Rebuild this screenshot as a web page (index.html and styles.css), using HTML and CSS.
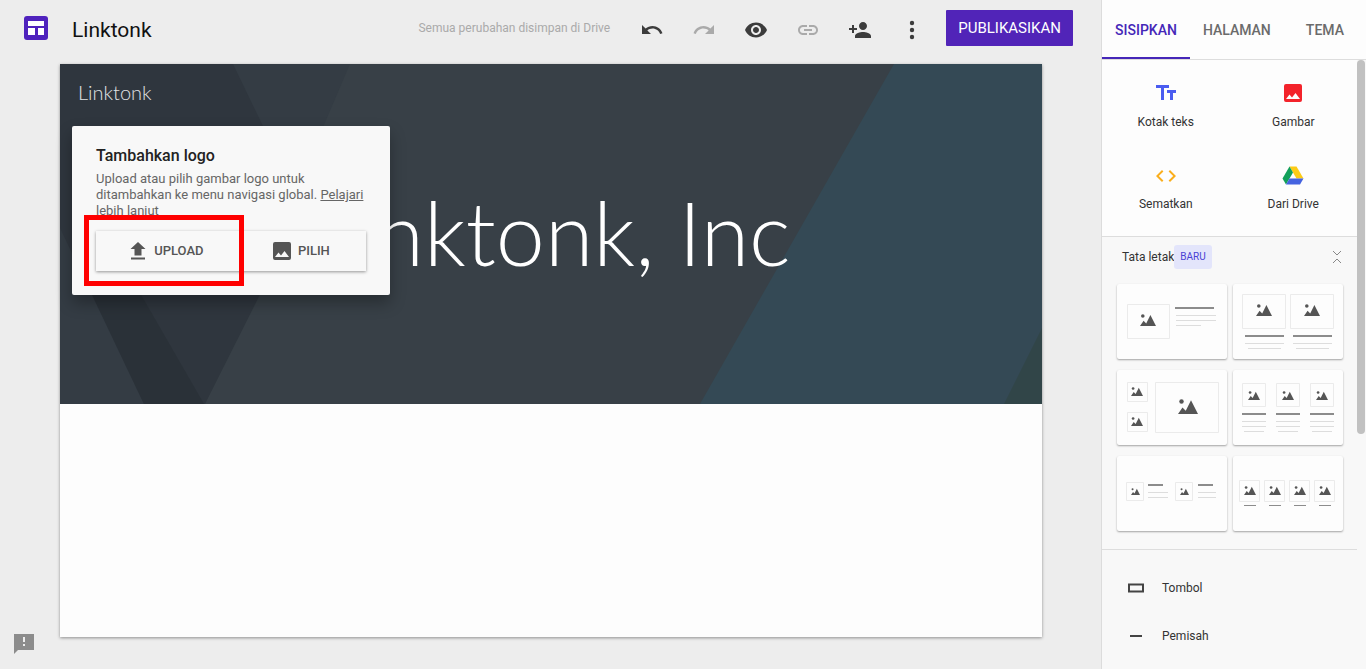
FILE: index.html
```
<!DOCTYPE html>
<html lang="id">
<head>
    <meta charset="UTF-8">
    <meta name="viewport" content="width=device-width, initial-scale=1.0">
    <title>Linktonk</title>
    <link rel="stylesheet" href="styles.css">
</head>
<body>
    <svg class="defs" aria-hidden="true">
        <symbol id="hills" viewBox="0 0 16 12">
            <circle cx="2.8" cy="2" r="1.8"/>
            <path d="M0 12l3.6-5.2 2.6 2.6L10.4 1 16 12z"/>
        </symbol>
    </svg>

    <div class="editor">
        <header class="topbar">
            <svg class="logo" viewBox="0 0 24 24">
                <rect width="24" height="24" rx="3" fill="#4f22bd"/>
                <path d="M4 5h16v5H4zM4 12h7v7H4zM14 12h6v7h-6z" fill="#fff"/>
            </svg>
            <h1 class="doc-title">Linktonk</h1>
            <span class="status">Semua perubahan disimpan di Drive</span>
            <div class="tools">
                <button class="tool" aria-label="Urungkan"><svg viewBox="0 0 24 24"><path d="M12.5 8c-2.65 0-5.05.99-6.9 2.6L2 7v9h9l-3.62-3.62c1.39-1.16 3.16-1.88 5.12-1.88 3.54 0 6.55 2.31 7.6 5.5l2.37-.78C21.08 11.03 17.15 8 12.5 8z"/></svg></button>
                <button class="tool off" aria-label="Ulangi"><svg viewBox="0 0 24 24"><path d="M18.4 10.6C16.55 8.99 14.15 8 11.5 8c-4.65 0-8.58 3.03-9.96 7.22L3.9 16c1.05-3.19 4.05-5.5 7.6-5.5 1.95 0 3.73.72 5.12 1.88L13 16h9V7l-3.6 3.6z"/></svg></button>
                <button class="tool" aria-label="Pratinjau"><svg viewBox="0 0 24 24"><path d="M12 4.5C7 4.5 2.73 7.61 1 12c1.73 4.39 6 7.5 11 7.5s9.27-3.11 11-7.5c-1.73-4.39-6-7.5-11-7.5zM12 17c-2.76 0-5-2.24-5-5s2.24-5 5-5 5 2.24 5 5-2.24 5-5 5zm0-8c-1.66 0-3 1.34-3 3s1.34 3 3 3 3-1.34 3-3-1.34-3-3-3z"/></svg></button>
                <button class="tool off" aria-label="Salin link"><svg viewBox="0 0 24 24"><path d="M3.9 12c0-1.71 1.39-3.1 3.1-3.1h4V7H7c-2.76 0-5 2.24-5 5s2.24 5 5 5h4v-1.9H7c-1.71 0-3.1-1.39-3.1-3.1zM8 13h8v-2H8v2zm9-6h-4v1.9h4c1.71 0 3.1 1.39 3.1 3.1s-1.39 3.1-3.1 3.1h-4V17h4c2.76 0 5-2.24 5-5s-2.24-5-5-5z"/></svg></button>
                <button class="tool" aria-label="Bagikan"><svg viewBox="0 0 24 24"><path d="M15 12c2.21 0 4-1.79 4-4s-1.79-4-4-4-4 1.79-4 4 1.79 4 4 4zm-9-2V7H4v3H1v2h3v3h2v-3h3v-2H6zm9 4c-2.67 0-8 1.34-8 4v2h16v-2c0-2.66-5.33-4-8-4z"/></svg></button>
                <button class="tool" aria-label="Lainnya"><svg viewBox="0 0 24 24"><circle cx="12" cy="5" r="2.2"/><circle cx="12" cy="12" r="2.2"/><circle cx="12" cy="19" r="2.2"/></svg></button>
            </div>
            <button class="publish">PUBLIKASIKAN</button>
        </header>

        <main class="site">
            <section class="banner">
                <svg class="banner-art" viewBox="0 0 982 340" preserveAspectRatio="none" aria-hidden="true">
                    <rect width="982" height="340" fill="#384047"/>
                    <path d="M0 0h290L145 340H0z" fill="#343c44"/>
                    <path d="M0 0h173l70 145-98 195H84L0 164z" fill="#2f363e"/>
                    <path d="M28 222h48l68 118H84z" fill="#2a3138"/>
                    <path d="M834 0h148v340H640z" fill="#344955"/>
                    <path d="M982 264v76h-38z" fill="#314548"/>
                </svg>
                <a class="site-name" href="#">Linktonk</a>
                <h2 class="site-title">Linktonk, Inc</h2>
                <div class="popup">
                    <h3>Tambahkan logo</h3>
                    <p>Upload atau pilih gambar logo untuk ditambahkan ke menu navigasi global. <a href="#">Pelajari lebih lanjut</a></p>
                    <div class="popup-actions">
                        <button><svg viewBox="0 0 20 20"><path d="M6.500 14.500h7V8h4L10 1 2.500 8h4zM3 16.500h14v2H3z"/></svg>UPLOAD</button>
                        <button><svg viewBox="0 0 20 20"><path d="M19 17V3a2 2 0 0 0-2-2H3a2 2 0 0 0-2 2v14a2 2 0 0 0 2 2h14a2 2 0 0 0 2-2zM6.500 11.500l2.500 3 3.500-4.500 4.500 6H3z"/></svg>PILIH</button>
                    </div>
                    <div class="highlight"></div>
                </div>
            </section>
        </main>

        <button class="feedback" aria-label="Masukan"><svg viewBox="0 0 24 24"><path d="M22 2H2v20l4-4h16zM13 14h-2v-2h2zm0-4h-2V5h2z"/></svg></button>
    </div>

    <aside class="panel">
        <nav class="tabs">
            <button class="tab active">SISIPKAN</button>
            <button class="tab">HALAMAN</button>
            <button class="tab">TEMA</button>
        </nav>
        <div class="panel-body">
            <div class="insert">
                <button>
                    <svg viewBox="0 0 24 24"><path d="M2 4v3h5v12h3V7h5V4zM22 9h-9v3h3v7h3v-7h3z" fill="#4a5cf0"/></svg>
                    Kotak teks
                </button>
                <button>
                    <svg viewBox="0 0 24 24"><path d="M21 19V5a2 2 0 0 0-2-2H5a2 2 0 0 0-2 2v14a2 2 0 0 0 2 2h14a2 2 0 0 0 2-2zM8.500 13.500l2.500 3 3.500-4.500 4.500 6H5z" fill="#f3232b"/></svg>
                    Gambar
                </button>
                <button>
                    <svg viewBox="0 0 24 24"><path d="M9.400 16.600 4.800 12l4.600-4.600L8 6l-6 6 6 6zM14.600 16.600l4.600-4.600-4.600-4.600L16 6l6 6-6 6z" fill="#faae1c"/></svg>
                    Sematkan
                </button>
                <button>
                    <svg viewBox="0 0 24 24"><path d="M8.500 2.500h7l7 12h-7z" fill="#fccb16"/><path d="M8.500 2.500 12 8.500l-7 12-3.500-6z" fill="#12a05a"/><path d="M8.500 14.500h14l-3.500 6H5z" fill="#4563e0"/></svg>
                    Dari Drive
                </button>
            </div>

            <section class="layouts">
                <div class="layouts-head">
                    <span>Tata letak</span><span class="badge">BARU</span>
                    <button class="collapse" aria-label="Ciutkan"><svg viewBox="0 0 12 16"><path d="M2 2l4 4 4-4M2 14l4-4 4 4"/></svg></button>
                </div>
                <div class="layout-grid">
                    <button aria-label="Tata letak 1"><svg viewBox="0 0 110 75">
                        <path class="box" d="M10.500 20.500h42v34h-42z"/>
                        <use href="#hills" x="23" y="30" width="16" height="12"/>
                        <path class="head" d="M58 24h39"/>
                        <path class="line" d="M59 31.500h40M59 36.500h40M59 41.500h25"/>
                    </svg></button>
                    <button aria-label="Tata letak 2"><svg viewBox="0 0 110 75">
                        <path class="box" d="M9.500 10.500h43v34h-43zM57.500 10.500h43v34h-43z"/>
                        <use href="#hills" x="23" y="20" width="16" height="12"/>
                        <use href="#hills" x="71" y="20" width="16" height="12"/>
                        <path class="head" d="M12 52h39M60 52h39"/>
                        <path class="line" d="M12 59.500h39M60 59.500h39M15 64.500h33M63 64.500h33"/>
                    </svg></button>
                    <button aria-label="Tata letak 3"><svg viewBox="0 0 110 75">
                        <path class="box" d="M10.500 12.500h20v19h-20zM10.500 42.500h20v19h-20zM38.500 12.500h63v50h-63z"/>
                        <use href="#hills" x="14" y="17" width="12" height="9"/>
                        <use href="#hills" x="14" y="47" width="12" height="9"/>
                        <use href="#hills" x="61" y="29" width="20" height="15"/>
                    </svg></button>
                    <button aria-label="Tata letak 4"><svg viewBox="0 0 110 75">
                        <path class="box" d="M9.500 13.500h23v23h-23zM43.500 13.500h23v23h-23zM77.500 13.500h23v23h-23z"/>
                        <use href="#hills" x="15" y="21" width="12" height="9"/>
                        <use href="#hills" x="49" y="21" width="12" height="9"/>
                        <use href="#hills" x="83" y="21" width="12" height="9"/>
                        <path class="head" d="M9 44h24M43 44h24M77 44h24"/>
                        <path class="line" d="M9 51.500h24M43 51.500h24M77 51.500h24M9 56.500h24M43 56.500h24M77 56.500h24M11 61.500h20M45 61.500h20M79 61.500h20"/>
                    </svg></button>
                    <button aria-label="Tata letak 5"><svg viewBox="0 0 110 75">
                        <path class="box" d="M9.500 26.500h17v18h-17zM58.500 26.500h17v18h-17z"/>
                        <use href="#hills" x="14" y="32" width="9" height="7"/>
                        <use href="#hills" x="63" y="32" width="9" height="7"/>
                        <path class="head" d="M31 29h15M81 29h15"/>
                        <path class="line" d="M31 36.500h20M81 36.500h18M31 41.500h20M81 41.500h18"/>
                    </svg></button>
                    <button aria-label="Tata letak 6"><svg viewBox="0 0 110 75">
                        <path class="box" d="M6.500 24.500h20v21h-20zM31.500 24.500h20v21h-20zM56.500 24.500h20v21h-20zM81.500 24.500h20v21h-20z"/>
                        <use href="#hills" x="11" y="30" width="12" height="9"/>
                        <use href="#hills" x="36" y="30" width="12" height="9"/>
                        <use href="#hills" x="61" y="30" width="12" height="9"/>
                        <use href="#hills" x="86" y="30" width="12" height="9"/>
                        <path class="head thin" d="M11 49.500h12M36 49.500h12M61 49.500h12M86 49.500h12"/>
                    </svg></button>
                </div>
            </section>

            <div class="items">
                <button><svg viewBox="0 0 16 16"><path d="M1 4.500h14v7H1z"/></svg>Tombol</button>
                <button><svg viewBox="0 0 16 16"><path d="M2 8h12"/></svg>Pemisah</button>
            </div>
        </div>
        <div class="scrollbar"></div>
    </aside>
</body>
</html>
```
FILE: styles.css
```
* {
    box-sizing: border-box;
}

body {
    display: flex;
    min-height: 100vh;
    margin: 0;
    background: #ededed;
    color: #333;
    font-family: Roboto, Arial, sans-serif;
    font-size: 12px;
}

h1, h2, h3, p {
    margin: 0;
}

button {
    padding: 0;
    border: none;
    background: none;
    color: inherit;
    font: inherit;
    cursor: pointer;
}

svg {
    display: block;
    flex: none;
}

.defs {
    position: absolute;
    width: 0;
    height: 0;
}

/* Editor */
.editor {
    position: relative;
    display: flex;
    flex: 1;
    flex-direction: column;
    min-width: 0;
    padding-bottom: 32px;
}

.topbar {
    display: flex;
    align-items: center;
    height: 64px;
    padding: 0 28px 8px 24px;
}

.logo {
    width: 24px;
    height: 24px;
}

.doc-title {
    margin-left: 24px;
    padding-top: 4px;
    color: #111;
    font-size: 21px;
    font-weight: 400;
    line-height: 24px;
}

.status {
    margin: 0 16px 0 auto;
    color: #aaa;
}

.tools {
    display: flex;
    padding-top: 4px;
}

.tool {
    display: flex;
    justify-content: center;
    width: 52px;
}

.tool svg {
    width: 24px;
    height: 24px;
    fill: #3c3c3c;
}

.tool.off svg {
    fill: #aaa;
}

.publish {
    height: 36px;
    margin-left: 8px;
    padding: 0 12px;
    border-radius: 1px;
    background: #5124b8;
    color: #fff;
    font-size: 15px;
}

.site {
    flex: 1;
    margin: 0 59px 0 60px;
    background: #fdfdfd;
    box-shadow: 0 1px 3px rgba(0, 0, 0, 0.4);
}

.banner {
    position: relative;
    display: flex;
    flex-direction: column;
    height: 340px;
    color: #fff;
    font-family: Lato, sans-serif;
    font-weight: 300;
}

.banner-art {
    position: absolute;
    width: 100%;
    height: 100%;
}

.site-name {
    position: relative;
    padding: 15px 18px;
    color: #e0e3e5;
    font-size: 20px;
    line-height: 26px;
    text-decoration: none;
}

.site-title {
    position: relative;
    padding-top: 56px;
    font-size: 88px;
    font-weight: 300;
    line-height: 112px;
    text-align: center;
}

.popup {
    position: absolute;
    top: 62px;
    left: 12px;
    width: 318px;
    padding: 20px 24px 24px;
    border-radius: 2px;
    background: #f8f8f8;
    box-shadow: 0 8px 16px rgba(0, 0, 0, 0.3);
    color: #666;
    font-family: Roboto, Arial, sans-serif;
    font-size: 13px;
    font-weight: 400;
    line-height: 16px;
}

.popup h3 {
    margin-bottom: 5px;
    color: #222;
    font-size: 16px;
    font-weight: 500;
    line-height: 20px;
}

.popup a {
    color: inherit;
}

.popup-actions {
    display: flex;
    width: 270px;
    margin-top: 12px;
    box-shadow: 0 1px 3px rgba(0, 0, 0, 0.4);
}

.popup-actions button {
    display: flex;
    flex: 1 1 auto;
    align-items: center;
    justify-content: center;
    gap: 6px;
    height: 40px;
    padding-right: 4px;
    color: #555;
    font-weight: 500;
}

.popup-actions svg {
    width: 20px;
    height: 20px;
    fill: #555;
}

.highlight {
    position: absolute;
    top: 89px;
    left: 12px;
    width: 160px;
    height: 71px;
    border: 5px solid #f00;
    pointer-events: none;
}

.feedback {
    position: absolute;
    bottom: 13px;
    left: 12px;
}

.feedback svg {
    width: 24px;
    height: 24px;
    fill: #8c8c8c;
}

/* Side panel */
.panel {
    position: relative;
    width: 265px;
    border-left: 1px solid #dcdcdc;
    background: #f8f8f8;
}

.tabs {
    display: flex;
    height: 60px;
    border-bottom: 1px solid #ddd;
    background: #fdfdfd;
}

.tab {
    padding: 2px 13px 0;
    border-bottom: 2px solid transparent;
    color: #6b6b6b;
    font-size: 14px;
    font-weight: 500;
}

.tab:last-child {
    flex: 1;
}

.tab.active {
    border-bottom-color: #4527b8;
    color: #4527b8;
}

.panel-body {
    margin-right: 9px;
}

.insert {
    display: grid;
    grid-template-columns: 1fr 1fr;
    padding: 11px 0;
    border-bottom: 1px solid #ddd;
    background: #fdfdfd;
}

.insert button {
    display: flex;
    flex-direction: column;
    align-items: center;
    gap: 9px;
    height: 77px;
    padding-top: 10px;
    line-height: 16px;
}

.insert svg {
    width: 24px;
    height: 24px;
}

.insert button:nth-child(n+3) {
    padding-top: 16px;
    gap: 8px;
}

.layouts {
    padding: 7px 14px 18px 15px;
    border-bottom: 1px solid #ddd;
}

.layouts-head {
    display: flex;
    align-items: center;
    height: 26px;
    margin-bottom: 14px;
    padding-left: 5px;
}

.badge {
    padding: 4px 6px;
    border-radius: 3px;
    background: #e3e5fb;
    color: #4a41d4;
    font-size: 10px;
    line-height: 16px;
}

.collapse {
    margin-left: auto;
}

.collapse svg {
    width: 12px;
    height: 16px;
    fill: none;
    stroke: #888;
}

.layout-grid {
    display: grid;
    grid-template-columns: 1fr 1fr;
    gap: 11px 6px;
}

.layout-grid button {
    border-radius: 2px;
    background: #fdfdfd;
    box-shadow: 0 1px 2px rgba(0, 0, 0, 0.35);
}

.layout-grid svg {
    width: 100%;
    fill: #555;
}

.layout-grid .box {
    fill: none;
    stroke: #ebebeb;
}

.layout-grid .head {
    stroke: #8c8c8c;
    stroke-width: 2;
}

.layout-grid .thin {
    stroke-width: 1;
}

.layout-grid .line {
    stroke: #ddd;
}

.items {
    padding-top: 14px;
}

.items button {
    display: flex;
    align-items: center;
    gap: 18px;
    width: 100%;
    height: 48px;
    padding-left: 26px;
}

.items svg {
    width: 16px;
    height: 16px;
    fill: none;
    stroke: #444;
    stroke-width: 2;
}

.scrollbar {
    position: absolute;
    top: 60px;
    right: 1px;
    width: 8px;
    height: 374px;
    border-radius: 4px;
    background: #c1c1c1;
}
```
